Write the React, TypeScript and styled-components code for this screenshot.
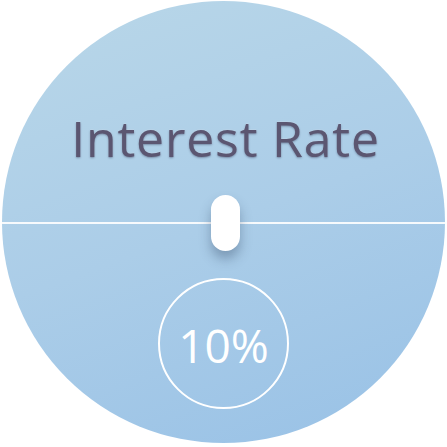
import React from "react";
import styled, { createGlobalStyle } from "styled-components";

const GlobalStyle = createGlobalStyle`
  html, body {
    margin: 0;
    padding: 0;
    background: #ffffff;
  }
  body {
    font-family: "Open Sans", "Noto Sans", "Liberation Sans", sans-serif;
  }
`;

const Page = styled.div`
  width: 447px;
  height: 447px;
  padding: 1px 0 0 2px;
  box-sizing: border-box;
`;

const Dial = styled.div`
  width: 443px;
  height: 442px;
  border-radius: 50%;
  overflow: hidden;
  display: flex;
  flex-direction: column;
  align-items: center;
  background: linear-gradient(160deg, #b9d7e8 0%, #abcde8 50%, #98c1e6 100%);
`;

const Title = styled.h1`
  margin: 112px 0 0 4px;
  font-size: 50px;
  line-height: 1;
  font-weight: 500;
  color: #5b5671;
  letter-spacing: 0.8px;
  text-shadow: 0 1px 2px rgba(40, 40, 70, 0.4), 0 -1px 0 rgba(255, 255, 255, 0.15);
`;

const Track = styled.div`
  align-self: stretch;
  height: 56px;
  margin-top: 32px;
  display: flex;
  justify-content: center;
  background: linear-gradient(
    to bottom,
    transparent 27px,
    rgba(255, 255, 255, 0.9) 27px,
    rgba(255, 255, 255, 0.9) 29px,
    transparent 29px
  );
`;

const Thumb = styled.div<{ $offset: number }>`
  width: 29px;
  height: 56px;
  margin-left: ${(p) => p.$offset}px;
  border-radius: 15px;
  background: #ffffff;
  box-shadow: 0 8px 12px rgba(40, 60, 90, 0.35);
`;

const ValueRing = styled.div`
  width: 131px;
  height: 131px;
  margin-top: 27px;
  box-sizing: border-box;
  border: 2px solid #ffffff;
  border-radius: 50%;
  display: flex;
  align-items: center;
  justify-content: center;
`;

const Value = styled.span`
  font-size: 46px;
  font-weight: 400;
  line-height: 1;
  color: #ffffff;
  margin-top: 2px;
`;

export default function App() {
  const rate = 10;
  return (
    <>
      <GlobalStyle />
      <Page>
        <Dial>
          <Title>Interest Rate</Title>
          <Track>
            <Thumb $offset={4} />
          </Track>
          <ValueRing>
            <Value>{rate}%</Value>
          </ValueRing>
        </Dial>
      </Page>
    </>
  );
}
